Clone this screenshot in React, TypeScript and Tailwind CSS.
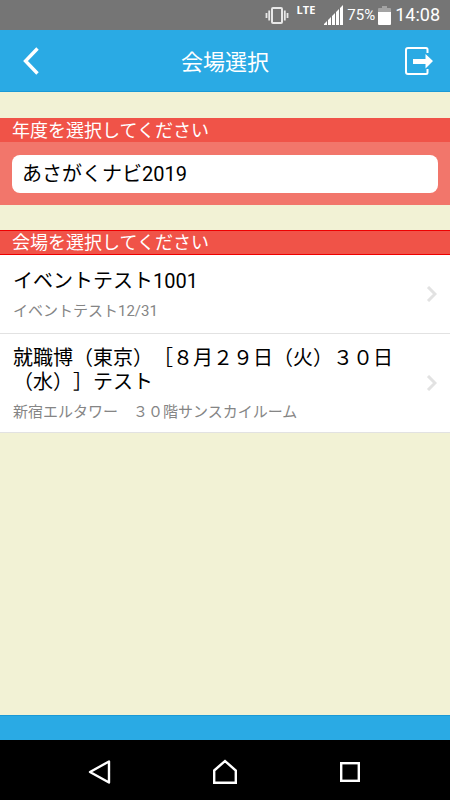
import { useState } from 'react'

interface Venue {
  id: number
  name: string
  place: string
}

const years = ['あさがくナビ2019']

const venues: Venue[] = [
  { id: 1, name: 'イベントテスト1001', place: 'イベントテスト12/31' },
  {
    id: 2,
    name: '就職博（東京）［８月２９日（火）３０日（水）］テスト',
    place: '新宿エルタワー　３０階サンスカイルーム',
  },
]

function StatusBar() {
  return (
    <div className="flex h-[30px] items-center justify-end bg-[#757575] pr-[10px] text-white">
      <svg className="mr-2 h-5 w-6" viewBox="0 0 24 20" fill="none" stroke="#e8e8e8">
        <rect x="7" y="3" width="10" height="15" rx="1" strokeWidth="2" />
        <path d="M4.200 5.500v10M19.800 5.500v10" strokeWidth="1.8" />
        <path d="M1.500 8v5M22.500 8v5" strokeWidth="1.8" />
      </svg>
      <span className="mr-[9px] self-start pt-1 font-['Open_Sans'] text-[11px] leading-3 font-bold">LTE</span>
      <svg className="mr-1 h-5 w-[19px]" viewBox="0 0 19 20" fill="#fff">
        <path d="M0 20v-1l3-3v4zM4 20v-5l3-3v8zM8 20v-9l3-3v12zM12 20V7l3-3v16zM16 20V3l3-3v20z" />
      </svg>
      <span className="text-[15px] leading-5">75%</span>
      <svg className="mr-1 ml-[3px] h-5 w-[13px]" viewBox="0 0 13 20">
        <path d="M4 1h5v2h3a1 1 0 0 1 1 1v4H0V4a1 1 0 0 1 1-1h3z" fill="#a3a3a3" />
        <path d="M0 7h13v12a1 1 0 0 1-1 1H1a1 1 0 0 1-1-1z" fill="#fff" />
      </svg>
      <span className="text-[18px] leading-5">14:08</span>
    </div>
  )
}

function Header() {
  return (
    <header className="flex h-[62px] items-center justify-between border-b border-[#1b9ad6] bg-[#2aaae4] px-[13px] text-white">
      <button type="button" aria-label="戻る" className="flex size-9 items-center justify-center">
        <svg className="h-7 w-4" viewBox="0 0 16 28" fill="none" stroke="#fff" strokeWidth="3.4">
          <path d="M14.500 1.500L2.500 14L14.500 26.500" />
        </svg>
      </button>
      <h1 className="pt-1 text-[22px] leading-8">会場選択</h1>
      <button type="button" aria-label="ログアウト" className="flex size-9 items-center justify-center">
        <svg className="h-7 w-7" viewBox="0 0 28 28" fill="none">
          <path
            d="M22.5 6V2.5a1.5 1.5 0 0 0-1.5-1.5H3a2 2 0 0 0-2 2V25a2 2 0 0 0 2 2H21a1.5 1.5 0 0 0 1.5-1.5V22"
            stroke="#fff"
            strokeWidth="2"
          />
          <path d="M8 12h12.500V7L28 14L20.500 21.500V17H8z" fill="#fff" />
        </svg>
      </button>
    </header>
  )
}

function VenueRow({ venue }: { venue: Venue }) {
  return (
    <li className="border-b border-[#e2e2e2] bg-white">
      <button type="button" className="flex min-h-[78px] w-full items-center px-[13px] text-left">
        <span className="flex flex-1 flex-col gap-2 pt-3 pb-[10px]">
          <span className="text-[20px] leading-6 text-black">{venue.name}</span>
          <span className="text-[15px] leading-5 text-[#858585]">{venue.place}</span>
        </span>
        <svg className="h-4 w-3" viewBox="0 0 12 16" fill="none" stroke="#e2e2e2" strokeWidth="3">
          <path d="M3 1l7 7l-7 7" />
        </svg>
      </button>
    </li>
  )
}

function NavigationBar() {
  return (
    <nav className="flex h-[60px] items-center justify-center gap-[99px] bg-black pt-1">
      <button type="button" aria-label="戻る">
        <svg className="size-[26px]" viewBox="0 0 26 26" fill="none" stroke="#fff" strokeWidth="2.4" strokeLinejoin="round">
          <path d="M22 2.500V23.500L3 13z" />
        </svg>
      </button>
      <button type="button" aria-label="ホーム">
        <svg className="size-[26px]" viewBox="0 0 26 26" fill="none" stroke="#fff" strokeWidth="2.4">
          <path d="M2.200 11.500L13 2L23.800 11.500V23.800H2.200z" />
        </svg>
      </button>
      <button type="button" aria-label="履歴">
        <svg className="size-[26px]" viewBox="0 0 26 26" fill="none" stroke="#fff" strokeWidth="2.4">
          <rect x="4.200" y="4.200" width="17.600" height="17.600" />
        </svg>
      </button>
    </nav>
  )
}

export default function App() {
  const [year, setYear] = useState(years[0])

  return (
    <div className="flex min-h-screen flex-col bg-[#f2f2d5] font-[Roboto,'Noto_Sans_CJK_JP',sans-serif] [text-spacing-trim:space-all]">
      <StatusBar />
      <Header />

      <main className="flex-1 pt-[26px]">
        {/* Year */}
        <section className="bg-[#f2766b]">
          <label htmlFor="year" className="block bg-[#f05348] px-3 pt-0.5 text-[18px] leading-[22px] text-white">
            年度を選択してください
          </label>
          <div className="px-3 pt-[13px] pb-3">
            <select
              id="year"
              value={year}
              onChange={(e) => setYear(e.target.value)}
              className="block h-[38px] w-full appearance-none rounded-lg bg-white px-[10px] text-[20px] text-black"
            >
              {years.map((y) => (
                <option key={y}>{y}</option>
              ))}
            </select>
          </div>
        </section>

        {/* Venues */}
        <section className="mt-[25px]">
          <h2 className="border-y border-[#ee0000] bg-[#f05348] px-3 pt-px text-[18px] leading-[22px] text-white">
            会場を選択してください
          </h2>
          <ul>
            {venues.map((venue) => (
              <VenueRow key={venue.id} venue={venue} />
            ))}
          </ul>
        </section>
      </main>

      <footer className="h-[25px] border-t border-[#1b9ad6] bg-[#2aaae4]" />
      <NavigationBar />
    </div>
  )
}
